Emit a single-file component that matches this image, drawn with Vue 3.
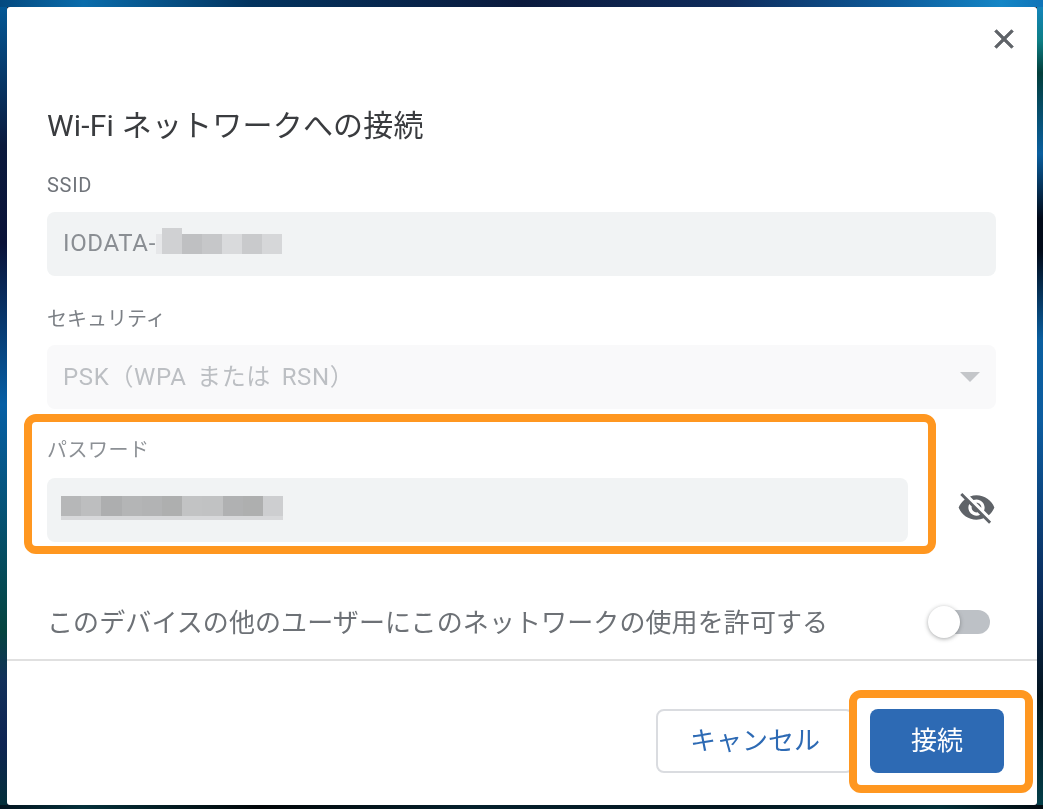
<script setup>
const ssidBlocks = [
  { c: '#e6e7e9', w: 6 },
  { c: '#d0d1d3', tall: true }, { c: '#bfc0c2' }, { c: '#c6c7c9' },
  { c: '#d9dadc' }, { c: '#c9cacc' }, { c: '#d6d7d9' }
]
const passBlocks = ['#b6b7b8', '#bdbebf', '#adaeaf', '#b4b5b6', '#b2b3b4', '#aeafaf', '#c2c3c4', '#c1c2c3', '#b0b1b2', '#aeafaf', '#cdced0']
</script>

<template>
  <div class="screen">
    <section class="dialog">
      <header class="top">
        <button class="close" aria-label="閉じる">
          <svg viewBox="0 0 24 24" width="32" height="32"><path fill="#5f6368" stroke="#5f6368" stroke-width="0.6" d="M19 6.41L17.59 5 12 10.59 6.41 5 5 6.41 10.59 12 5 17.59 6.41 19 12 13.41 17.59 19 19 17.59 13.41 12z"/></svg>
        </button>
      </header>

      <div class="body">
        <h1 class="title">Wi-Fi ネットワークへの接続</h1>

        <div class="field ssid">
          <div class="label">SSID</div>
          <div class="box">
            <span class="value">IODATA-</span>
            <span class="mosaic">
              <i v-for="(b, i) in ssidBlocks" :key="i" :class="{ tall: b.tall, sliver: b.w }" :style="{ background: b.c }"></i>
            </span>
          </div>
        </div>

        <div class="field security">
          <div class="label">セキュリティ</div>
          <div class="box light">
            <span class="value faded">PSK（WPA または RSN）</span>
            <span class="arrow"></span>
          </div>
        </div>

        <div class="password-row">
          <div class="field password">
            <div class="label">パスワード</div>
            <div class="box">
              <span class="mosaic pass">
                <i v-for="(c, i) in passBlocks" :key="i" :style="{ background: c }"></i>
              </span>
            </div>
            <div class="mark mark-field"></div>
          </div>
          <button class="eye" aria-label="パスワードを表示">
            <svg viewBox="0 0 24 24" width="39" height="39"><path fill="#5f6368" d="M12 7c2.76 0 5 2.24 5 5 0 .65-.13 1.26-.36 1.83l2.92 2.92c1.51-1.26 2.7-2.89 3.43-4.75-1.73-4.39-6-7.5-11-7.5-1.4 0-2.74.25-3.98.7l2.16 2.16C10.74 7.13 11.35 7 12 7zM2 4.27l2.28 2.28.46.46C3.08 8.3 1.78 10.02 1 12c1.73 4.39 6 7.5 11 7.5 1.55 0 3.03-.3 4.38-.84l.42.42L19.73 22 21 20.73 3.27 3 2 4.27zM7.53 9.8l1.55 1.55c-.05.21-.08.43-.08.65 0 1.66 1.34 3 3 3 .22 0 .44-.03.65-.08l1.55 1.55c-.67.33-1.41.53-2.2.53-2.76 0-5-2.24-5-5 0-.79.2-1.53.53-2.2zm4.31-.78l3.15 3.15.02-.16c0-1.66-1.34-3-3-3l-.17.01z"/></svg>
          </button>
        </div>

        <div class="share-row">
          <span class="share-text">このデバイスの他のユーザーにこのネットワークの使用を許可する</span>
          <span class="toggle"><span class="knob"></span></span>
        </div>
      </div>

      <footer class="footer">
        <button class="btn cancel"><span class="btn-text">キャンセル</span></button>
        <div class="connect-wrap">
          <button class="btn connect"><span class="btn-text">接続</span></button>
          <div class="mark mark-btn"></div>
        </div>
      </footer>
    </section>
  </div>
</template>

<style scoped>
.screen {
  width: 1043px;
  height: 809px;
  box-sizing: border-box;
  padding: 7px 6px 4px 7px;
  overflow: hidden;
  background-color: #06152f;
  background-image:
    linear-gradient(90deg, #04497f 0%, #0a6cab 8%, #03345f 24%, #0b1a3d 50%, #0f2c5c 70%, #0d5c9c 86%, #1486c6 96%, #0f74b8 100%),
    linear-gradient(90deg, #03141f 0%, #04303a 8%, #020608 25%, #04202c 45%, #03161f 70%, #033038 90%, #020a10 100%),
    linear-gradient(180deg, #035a99 0%, #0b1a3d 18%, #0a1238 30%, #065fa5 50%, #05443f 78%, #12305a 84%, #0e2452 92%, #033038 100%),
    linear-gradient(180deg, #1486c6 0%, #0e7f86 5%, #033f3c 9%, #0a5f9f 19%, #020a18 27%, #020a18 31%, #0a5fa0 42%, #0d5da0 52%, #0b2f60 72%, #04141f 86%, #03404a 100%);
  background-size: 100% 7px, 100% 4px, 7px 100%, 6px 100%;
  background-position: 0 0, 0 100%, 0 0, 100% 0;
  background-repeat: no-repeat;
  font-family: Roboto, "Noto Sans CJK JP", sans-serif;
}
.dialog {
  height: 798px;
  background: #fff;
  border-radius: 3px;
  display: flex;
  flex-direction: column;
}
.top {
  display: flex;
  justify-content: flex-end;
  padding: 16px 17px 0 0;
  height: 48px;
  box-sizing: border-box;
}
.close, .eye {
  background: none;
  border: 0;
  padding: 0;
  display: flex;
}
.body {
  padding: 0 41px 0 40px;
  height: 604px;
  box-sizing: border-box;
}
.title {
  margin: 50px 0 0;
  font-size: 30px;
  line-height: 42px;
  font-weight: 400;
  letter-spacing: 0.2px;
  color: #3a3c3f;
  filter: blur(0.35px);
}
.field { position: relative; }
.ssid { margin-top: 24px; }
.security { margin-top: 29px; }
.label {
  font-size: 20px;
  line-height: 28px;
  color: #70747a;
  margin-bottom: 13px;
  filter: blur(0.35px);
}
.ssid .label { letter-spacing: 0.7px; }
.security .label { margin-bottom: 12px; color: #7c8086; }
.password .label { color: #8c9095; margin-bottom: 14px; letter-spacing: 0.5px; }
.box {
  height: 64px;
  border-radius: 8px;
  background: #f1f3f4;
  display: flex;
  align-items: center;
  padding: 0 16px;
  box-sizing: border-box;
}
.box.light {
  background: #f9f9fa;
  justify-content: space-between;
}
.value {
  font-size: 24px;
  letter-spacing: 0.65px;
  line-height: 30px;
  margin-bottom: 3px;
  color: #8a8e93;
  filter: blur(0.35px);
}
.faded { color: #bcbfc3; word-spacing: 4px; margin-bottom: 0; }
.arrow {
  width: 0;
  height: 0;
  border-left: 10px solid transparent;
  border-right: 10px solid transparent;
  border-top: 10px solid #c4c6c9;
}
.mosaic {
  display: inline-flex;
  align-items: flex-end;
  margin-bottom: 6px;
  height: 26px;
}
.mosaic i {
  display: block;
  width: 20px;
  height: 20px;
}
.mosaic i.tall { height: 26px; }
.mosaic i.sliver { width: 6px; }
.mosaic.pass {
  margin-left: -2px;
  margin-bottom: 4px;
  height: 24px;
  align-items: flex-start;
}
.mosaic.pass i {
  height: 24px;
  width: 20.2px;
  border-bottom: 4px solid #d7d8da;
  box-sizing: border-box;
}
.password-row {
  display: flex;
  align-items: flex-end;
  margin-top: 27px;
}
.password { width: 861px; }
.eye {
  margin-left: 49px;
  margin-bottom: 15px;
}
.mark {
  position: absolute;
  box-sizing: border-box;
  border: 8px solid #ff9720;
  border-radius: 12px;
  pointer-events: none;
}
.mark-field {
  left: -23px;
  right: -28px;
  top: -22px;
  bottom: -12px;
}
.share-row {
  display: flex;
  align-items: center;
  justify-content: space-between;
  margin-top: 60px;
  padding: 0 6px 0 2px;
  height: 40px;
}
.share-text {
  font-size: 26px;
  letter-spacing: 0.1px;
  color: #6d7176;
  padding-bottom: 4px;
  margin-left: -2px;
  filter: blur(0.35px);
}
.toggle {
  position: relative;
  display: block;
  width: 62px;
  height: 24px;
}
.toggle::before {
  content: "";
  position: absolute;
  left: 14px;
  right: 0;
  top: 0;
  bottom: 0;
  border-radius: 12px;
  background: #bdc1c6;
}
.knob {
  position: absolute;
  left: 0;
  top: -4px;
  width: 32px;
  height: 32px;
  border-radius: 50%;
  background: #fff;
  box-shadow: 0 1px 4px rgba(60, 64, 67, 0.45);
}
.footer {
  border-top: 2px solid #e0e0e0;
  flex: 1;
  display: flex;
  justify-content: flex-end;
  align-items: flex-start;
  gap: 16px;
  padding: 48px 33px 0 0;
}
.connect-wrap { position: relative; display: flex; }
.btn {
  height: 64px;
  border-radius: 8px;
  font: inherit;
  font-size: 26px;
  box-sizing: border-box;
  padding: 0 0 5px;
}
.btn-text {
  display: block;
  filter: blur(0.35px);
}
.cancel {
  width: 198px;
  background: #fff;
  border: 2px solid #dadce0;
  color: #2d6ab4;
}
.connect {
  width: 134px;
  background: #2d6ab4;
  border: 0;
  color: #fff;
}
.mark-btn {
  left: -21px;
  right: -29px;
  top: -19px;
  bottom: -20px;
}
</style>

<style>
body { margin: 0; background: #06152f; }
</style>
